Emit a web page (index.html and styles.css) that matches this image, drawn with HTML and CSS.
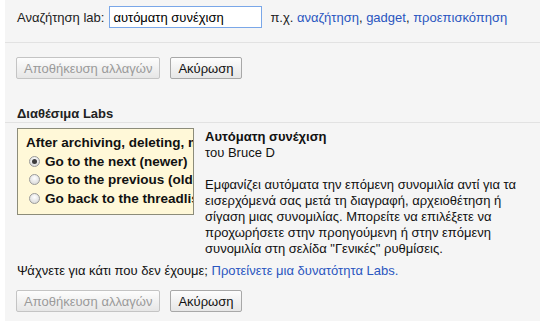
FILE: index.html
```html
<!DOCTYPE html>
<html>
<head>
<meta charset="utf-8">
<link rel="stylesheet" href="styles.css">
</head>
<body>
<div class="page">
  <div class="search-row">
    <span class="label">Αναζήτηση lab:</span>
    <input class="search-input" type="text" value="αυτόματη συνέχιση">
    <span class="hint">π.χ. <a class="link" href="#">αναζήτηση</a>, <a class="link" href="#">gadget</a>, <a class="link" href="#">προεπισκόπηση</a></span>
  </div>
  <div class="sep sep-top"></div>
  <div class="buttons buttons-top">
    <button class="btn btn-disabled">Αποθήκευση αλλαγών</button>
    <button class="btn">Ακύρωση</button>
  </div>
  <div class="section-title">Διαθέσιμα Labs</div>
  <div class="sep"></div>
  <div class="lab">
    <div class="preview">
      <div class="preview-inner">
        <div class="preview-q">After archiving, deleting, m</div>
        <div class="opt"><span class="radio radio-on"></span><span class="opt-text">Go to the next (newer)</span></div>
        <div class="opt"><span class="radio"></span><span class="opt-text">Go to the previous (older)</span></div>
        <div class="opt"><span class="radio"></span><span class="opt-text">Go back to the threadlist</span></div>
      </div>
    </div>
    <div class="lab-info">
      <div class="lab-name">Αυτόματη συνέχιση</div>
      <div class="lab-author">του Bruce D</div>
      <div class="lab-desc">Εμφανίζει αυτόματα την επόμενη συνομιλία αντί για τα εισερχόμενά σας μετά τη διαγραφή, αρχειοθέτηση ή σίγαση μιας συνομιλίας. Μπορείτε να επιλέξετε να προχωρήσετε στην προηγούμενη ή στην επόμενη συνομιλία στη σελίδα "Γενικές" ρυθμίσεις.</div>
    </div>
  </div>
  <div class="suggest">Ψάχνετε για κάτι που δεν έχουμε; <a class="link" href="#">Προτείνετε μια δυνατότητα Labs.</a></div>
  <div class="buttons buttons-bottom">
    <button class="btn btn-disabled">Αποθήκευση αλλαγών</button>
    <button class="btn">Ακύρωση</button>
  </div>
</div>
</body>
</html>
```
FILE: styles.css
```css
html, body {
  margin: 0;
  padding: 0;
  background: #ffffff;
}
.page {
  margin-left: 5px;
  height: 321px;
  background: #f5f5f5;
  font-family: "Liberation Sans", Arial, sans-serif;
  font-size: 13px;
  color: #222;
  overflow: hidden;
}
.search-row {
  display: flex;
  align-items: center;
  height: 22px;
  padding: 6px 0 0 12px;
}
.label {
  margin-right: 5px;
}
.search-input {
  box-sizing: border-box;
  width: 153px;
  height: 22px;
  margin: 0 8px 0 0;
  padding: 0 3px;
  border: 1px solid #7aa7e8;
  font-family: "Liberation Sans", Arial, sans-serif;
  font-size: 13px;
  color: #000;
  background: #fff;
  outline: none;
}
.link {
  color: #2a55c0;
  text-decoration: none;
}
.sep {
  border-top: 1px solid #e2e2e2;
}
.sep-top {
  margin-top: 14px;
}
.buttons {
  display: flex;
  gap: 10px;
  padding-left: 11px;
}
.buttons-top {
  margin-top: 14px;
}
.btn {
  box-sizing: border-box;
  height: 22px;
  padding: 0 7px;
  border: 1px solid #a8a8a8;
  border-radius: 2px;
  background: linear-gradient(#fdfdfd, #e6e6e6);
  font-family: "Liberation Sans", Arial, sans-serif;
  font-size: 13px;
  color: #111;
}
.btn-disabled {
  color: #9a9a9a;
  border-color: #c4c4c4;
}
.section-title {
  margin-top: 27px;
  padding-left: 12px;
  font-weight: bold;
  line-height: 15px;
  padding-bottom: 1px;
}
.lab {
  display: flex;
  margin-top: 5px;
  padding-left: 12px;
}
.preview {
  box-sizing: border-box;
  width: 177px;
  height: 87px;
  flex: none;
  border: 1px solid #8c8c7a;
  background: #fff8d8;
  overflow: hidden;
}
.preview-inner {
  padding: 5px 0 0 8px;
  white-space: nowrap;
  font-weight: bold;
  font-size: 13.5px;
  color: #111;
}
.preview-q {
  line-height: 18px;
}
.opt {
  display: flex;
  align-items: center;
  height: 18.5px;
  padding-left: 3px;
}
.opt-text {
  flex: none;
}
.radio {
  box-sizing: border-box;
  flex: none;
  width: 11px;
  height: 11px;
  margin-right: 5px;
  border-radius: 50%;
  border: 1px solid #9a9a9a;
  background: radial-gradient(circle at 50% 35%, #ffffff, #d2d2d2);
  position: relative;
}
.radio-on::after {
  content: "";
  position: absolute;
  left: 2px;
  top: 2px;
  width: 5px;
  height: 5px;
  border-radius: 50%;
  background: #3c3c3c;
}
.lab-info {
  margin-left: 11px;
  margin-top: 1px;
  line-height: 16px;
  width: 330px;
  color: #111;
}
.lab-name {
  font-weight: bold;
}
.lab-desc {
  margin-top: 16px;
}
.suggest {
  margin-top: 6px;
  padding-left: 12px;
  color: #111;
}
.buttons-bottom {
  margin-top: 12px;
}
```
